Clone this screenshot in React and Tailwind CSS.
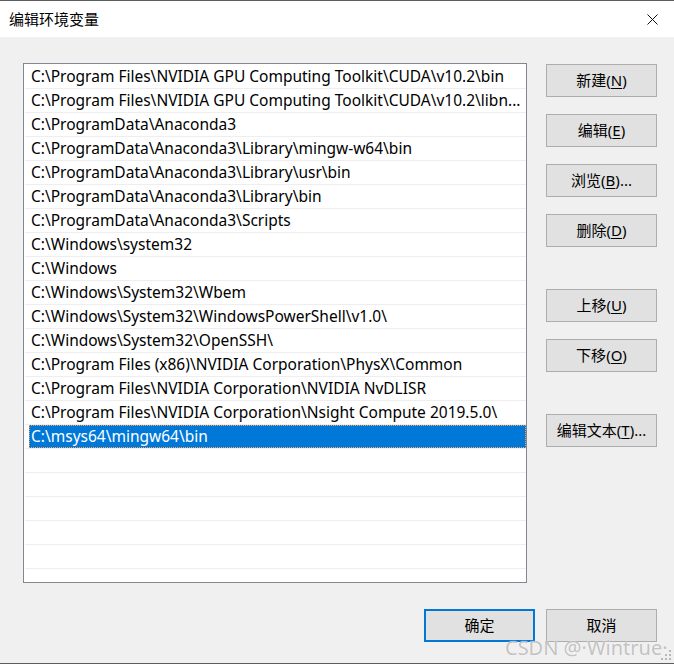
import React from "react";

const paths = [
  "C:\\Program Files\\NVIDIA GPU Computing Toolkit\\CUDA\\v10.2\\bin",
  "C:\\Program Files\\NVIDIA GPU Computing Toolkit\\CUDA\\v10.2\\libn...",
  "C:\\ProgramData\\Anaconda3",
  "C:\\ProgramData\\Anaconda3\\Library\\mingw-w64\\bin",
  "C:\\ProgramData\\Anaconda3\\Library\\usr\\bin",
  "C:\\ProgramData\\Anaconda3\\Library\\bin",
  "C:\\ProgramData\\Anaconda3\\Scripts",
  "C:\\Windows\\system32",
  "C:\\Windows",
  "C:\\Windows\\System32\\Wbem",
  "C:\\Windows\\System32\\WindowsPowerShell\\v1.0\\",
  "C:\\Windows\\System32\\OpenSSH\\",
  "C:\\Program Files (x86)\\NVIDIA Corporation\\PhysX\\Common",
  "C:\\Program Files\\NVIDIA Corporation\\NVIDIA NvDLISR",
  "C:\\Program Files\\NVIDIA Corporation\\Nsight Compute 2019.5.0\\",
  "C:\\msys64\\mingw64\\bin",
];
const selected = 15;

function Btn({ label, hot, tail = "", def = false, className = "" }) {
  return (
    <div
      className={`w-[111px] h-[33px] flex items-center justify-center bg-[#e1e1e1] text-[15px] text-black ${
        def ? "border-2 border-[#0078d7]" : "border border-[#adadad]"
      } ${className}`}
    >
      <span>
        {label}
        {hot && (
          <>
            (<span className="underline underline-offset-2">{hot}</span>)
          </>
        )}
        {tail}
      </span>
    </div>
  );
}

export default function App() {
  return (
    <div
      className="relative w-[674px] h-[664px] flex flex-col border-t border-b border-[#5c5c5c] overflow-hidden"
      style={{ fontFamily: '"Noto Sans", "Noto Sans CJK SC", sans-serif' }}
    >
      {/* title bar */}
      <div className="h-[36px] bg-white flex items-center justify-between pl-[9px] pr-[16px]">
        <span className="text-[15px] text-black">编辑环境变量</span>
        <svg width="11" height="11" viewBox="0 0 11 11">
          <path d="M0.5 0.5 L10.5 10.5 M10.5 0.5 L0.5 10.5" stroke="#111" strokeWidth="1" />
        </svg>
      </div>

      <div className="flex-1 bg-[#f0f0f0] flex flex-col pt-[26px] pl-[23px] pr-[17px]">
        <div className="flex">
          {/* list box */}
          <div className="w-[504px] h-[520px] border border-[#828790] bg-white pt-[1px] pl-[1px] overflow-hidden">
            {paths.map((p, i) => (
              <div key={i} className="w-[501px] h-[24px] border-b border-[#eeeeee] pl-[4px]">
                <div
                  className={`h-[23px] flex items-center pl-[2px] pt-[1px] text-[15.5px] whitespace-nowrap ${
                    i === selected
                      ? "bg-[#0078d7] text-white outline outline-1 outline-dotted outline-[#f5a35a] -outline-offset-1"
                      : "text-black"
                  }`}
                >
                  {p}
                </div>
              </div>
            ))}
            {Array.from({ length: 6 }).map((_, i) => (
              <div key={"e" + i} className="w-[501px] h-[24px] border-b border-[#eeeeee]" />
            ))}
          </div>

          {/* side buttons */}
          <div className="ml-[19px] pt-[1px] flex flex-col">
            <Btn label="新建" hot="N" />
            <Btn label="编辑" hot="E" className="mt-[17px]" />
            <Btn label="浏览" hot="B" tail="..." className="mt-[17px]" />
            <Btn label="删除" hot="D" className="mt-[17px]" />
            <Btn label="上移" hot="U" className="mt-[42px]" />
            <Btn label="下移" hot="O" className="mt-[17px]" />
            <Btn label="编辑文本" hot="T" tail="..." className="mt-[42px]" />
          </div>
        </div>

        <div className="mt-[26px] flex justify-end gap-[11px]">
          <Btn label="确定" def />
          <Btn label="取消" />
        </div>
      </div>

      {/* watermark */}
      <div
        className="absolute left-[505px] top-[632px] text-[20px] text-[#a8a8a8]/70 whitespace-nowrap pointer-events-none"
        style={{ textShadow: "0 0 1px #fff" }}
      >
        CSDN @·Wintrue·
      </div>

      {/* resize grip */}
      <svg className="absolute right-[2px] bottom-[2px]" width="11" height="11" viewBox="0 0 11 11">
        <rect x="8" y="0" width="2" height="2" fill="#b8b8b8" />
        <rect x="4" y="4" width="2" height="2" fill="#b8b8b8" />
        <rect x="8" y="4" width="2" height="2" fill="#b8b8b8" />
        <rect x="0" y="8" width="2" height="2" fill="#b8b8b8" />
        <rect x="4" y="8" width="2" height="2" fill="#b8b8b8" />
        <rect x="8" y="8" width="2" height="2" fill="#b8b8b8" />
      </svg>
    </div>
  );
}
